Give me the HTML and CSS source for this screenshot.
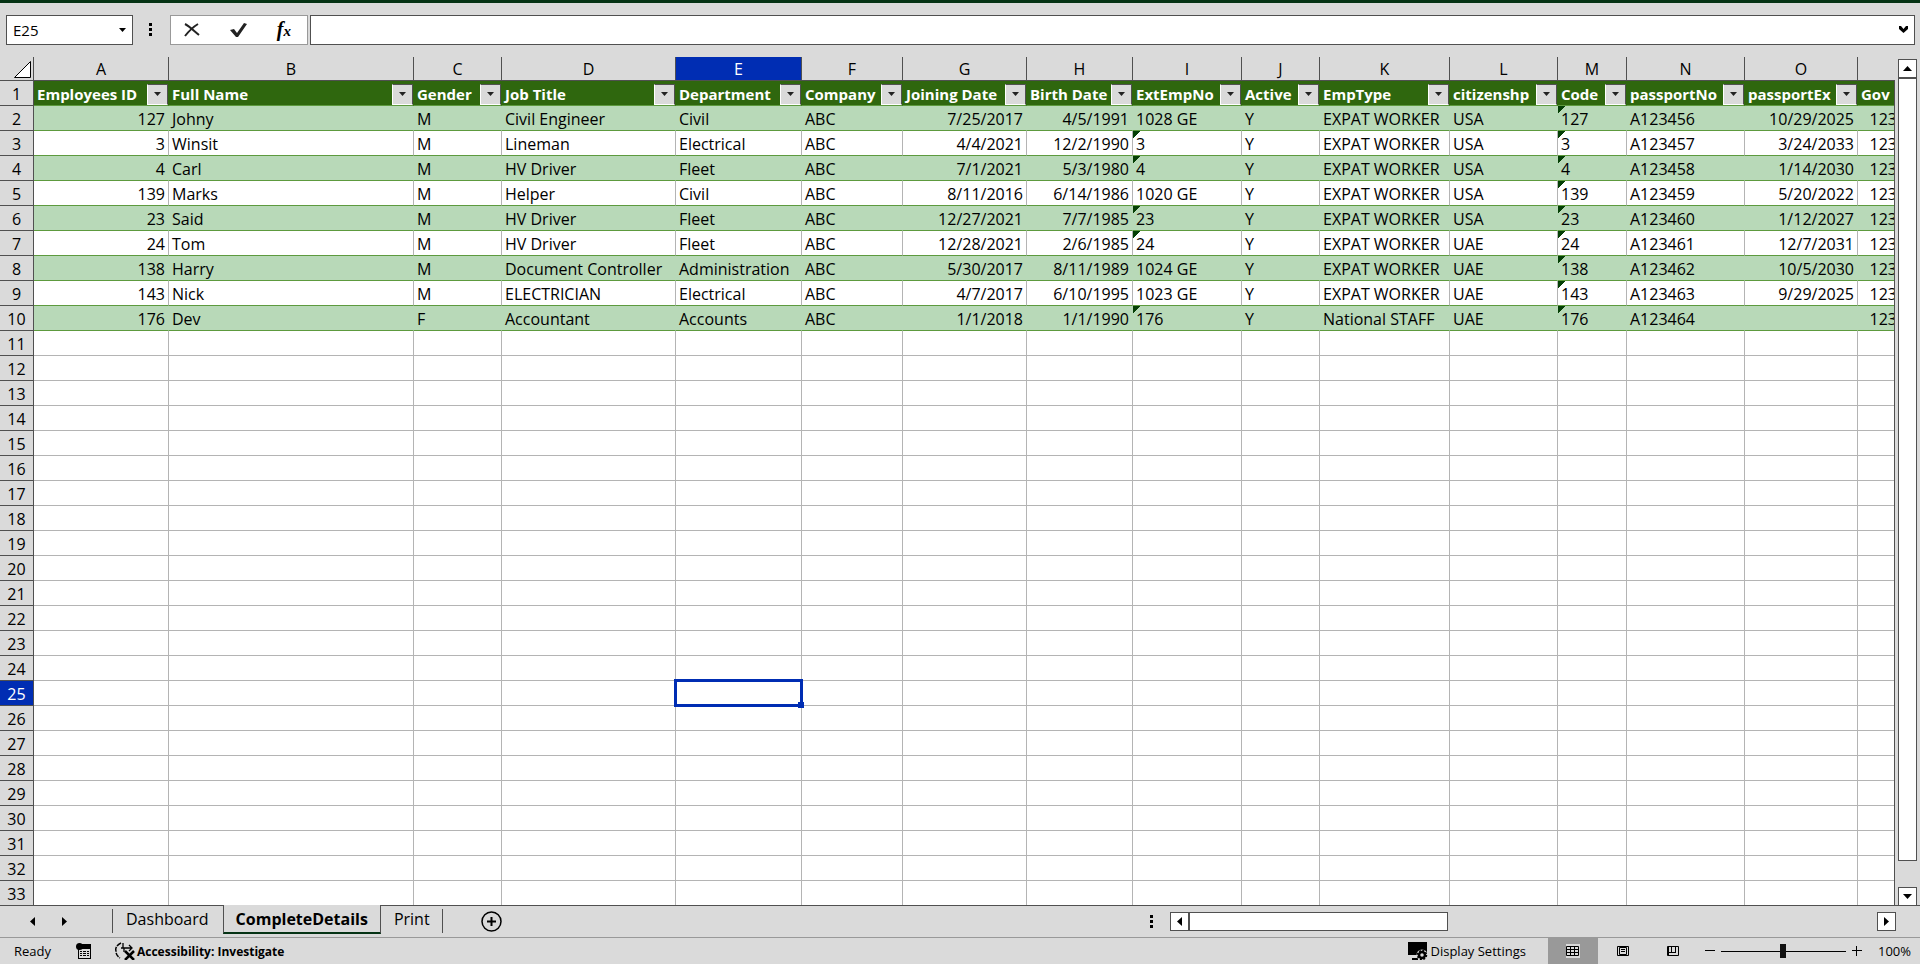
FILE: index.html
```
<!DOCTYPE html>
<html lang="en">
<head>
    <meta charset="UTF-8">
    <meta name="viewport" content="width=device-width, initial-scale=1.0">
    <title>CompleteDetails</title>
    <link rel="stylesheet" href="styles.css">
</head>
<body>
    <div class="app">

        <!-- Formula bar -->
        <div class="formula-bar">
            <div class="name-box">
                <input type="text" value="E25" aria-label="Name Box">
                <button aria-label="Open names"><svg width="7" height="4"><path d="M0 0h7L3.500 4z"/></svg></button>
            </div>
            <svg class="dots" width="3" height="13"><path d="M0 0h3v3H0zM0 5h3v3H0zM0 10h3v3H0z"/></svg>
            <div class="formula-buttons">
                <button aria-label="Cancel">
                    <svg width="16" height="14" fill="none" stroke="#222"><path d="M1 1c4 2 9 7 14 11" stroke-width="2"/><path d="M14 1C9 4 5 8 1 13" stroke-width="2"/></svg>
                </button>
                <button aria-label="Enter">
                    <svg width="17" height="14" fill="#222"><path d="M0 7l4-1 3 4L14 0l3 1L8 14H6z"/></svg>
                </button>
                <button class="fx" aria-label="Insert Function">f<span>x</span></button>
            </div>
            <div class="formula-input">
                <input type="text" value="" aria-label="Formula">
                <button aria-label="Expand formula bar"><svg width="9" height="7"><path d="M0 0h2l2.500 3L7 0h2v3L4.500 7 0 3z"/></svg></button>
            </div>
        </div>

        <!-- Grid -->
        <div class="main">
            <div class="grid">
                <table>
                    <colgroup id="cols"></colgroup>
                    <thead><tr id="letters"></tr></thead>
                    <tbody id="rows"></tbody>
                </table>
            </div>
            <div class="scroll-y">
                <button aria-label="Scroll up"><svg width="9" height="5"><path d="M0 5h9L4.500 0z"/></svg></button>
                <div class="thumb-y"></div>
                <div class="space-y"></div>
                <button aria-label="Scroll down"><svg width="9" height="5"><path d="M0 0h9L4.500 5z"/></svg></button>
            </div>
        </div>

        <!-- Sheet tabs -->
        <div class="tab-bar">
            <div class="tab-nav">
                <button aria-label="Previous sheet"><svg width="5" height="9"><path d="M5 0v9L0 4.500z"/></svg></button>
                <button aria-label="Next sheet"><svg width="5" height="9"><path d="M0 0v9l5-4.500z"/></svg></button>
            </div>
            <div class="tabs">
                <button class="tab tab-first">Dashboard</button>
                <button class="tab active">CompleteDetails</button>
                <button class="tab tab-last">Print</button>
            </div>
            <button class="add-sheet" aria-label="New sheet">
                <svg width="21" height="21" fill="none" stroke="#000"><circle cx="10.500" cy="10.500" r="9.500" stroke-width="1.500"/><path d="M10.500 6v9M6 10.500h9" stroke-width="2"/></svg>
            </button>
            <div class="scroll-x">
                <svg class="dots" width="3" height="13"><path d="M0 0h3v3H0zM0 5h3v3H0zM0 10h3v3H0z"/></svg>
                <button aria-label="Scroll left"><svg width="5" height="9"><path d="M5 0v9L0 4.500z"/></svg></button>
                <div class="thumb-x"></div>
                <div class="space-x"></div>
                <button aria-label="Scroll right"><svg width="5" height="9"><path d="M0 0v9l5-4.500z"/></svg></button>
            </div>
        </div>

        <!-- Status bar -->
        <div class="status-bar">
            <span class="ready">Ready</span>
            <button class="macro" aria-label="Record macro">
                <svg width="15" height="16"><path d="M2 1h13v15H2z"/><path d="M3 6h11v9H3z" fill="#dadada"/><circle cx="3.500" cy="3.500" r="3.500"/><path d="M4 8h2v1H4zM7 8h3v1H7zM11 8h2v1h-2zM4 10h2v1H4zM7 10h3v1H7zM11 10h2v1h-2zM4 12h2v1H4zM7 12h3v1H7zM11 12h2v1h-2z"/></svg>
            </button>
            <button class="accessibility">
                <svg width="20" height="18" fill="none" stroke="#000"><path d="M6 1C2 3 0 6 1 9c0 3 1 5 4 7" stroke-width="1.500" stroke-dasharray="5 1"/><path d="M8 1v5M6 6h10M14 3l3 3-3 3M9 6v4" stroke-width="1.300"/><path d="M10 9l9 9M19 9l-9 9" stroke-width="2.500"/></svg>
                Accessibility: Investigate
            </button>
            <button class="display-settings">
                <svg width="20" height="18"><path d="M0 0h19v13H0zM4 16h6v2H4z"/><circle cx="14" cy="13" r="5.500" fill="#dadada"/><circle cx="14" cy="13" r="3" fill="none" stroke="#000" stroke-width="2.500"/><circle cx="14" cy="13" r="4.500" fill="none" stroke="#000" stroke-width="1.500" stroke-dasharray="2 1.500"/></svg>
                Display Settings
            </button>
            <button class="view selected" aria-label="Normal">
                <svg width="14" height="14"><path d="M0 0h14v14H0z" fill="#dadada"/><path d="M.5 2.500h12v9H.5zM.5 5.500h12M.5 8.500h12M4.500 2.500v9M8.500 2.500v9" fill="none" stroke="#000"/></svg>
            </button>
            <button class="view" aria-label="Page Layout">
                <svg width="12" height="10" fill="none" stroke="#000"><path d="M.5.5h11v9H.5zM2.500 1.500h7v7h-7zM4 3.500h4M4 5.500h4"/></svg>
            </button>
            <button class="view" aria-label="Page Break Preview">
                <svg width="12" height="10" fill="none" stroke="#000"><path d="M.5.5h11v9H.5zM1.500 1v8M4.500.5v6M8.500.5v6M1 6.500h8"/></svg>
            </button>
            <div class="zoom">
                <button aria-label="Zoom out"><svg width="10" height="10"><path d="M0 4h10v1H0z"/></svg></button>
                <input type="range" min="10" max="190" value="100" aria-label="Zoom">
                <button aria-label="Zoom in"><svg width="10" height="10"><path d="M0 4h10v1H0zM4 0h1v10H4z"/></svg></button>
            </div>
            <button class="percent">100%</button>
        </div>
    </div>

    <script src="script.js"></script>
</body>
</html>
```
FILE: styles.css
```
* {
    box-sizing: border-box;
}

body {
    margin: 0;
    background: #fff;
    color: #000;
    font-family: "Open Sans", "Noto Sans", sans-serif;
    font-size: 16px;
}

button, input {
    margin: 0;
    padding: 0;
    border: none;
    background: none;
    color: inherit;
    font: inherit;
}

svg {
    display: block;
    flex: none;
}

.app {
    display: flex;
    flex-direction: column;
    height: calc(100vh - 2px);
    background: #dadada;
    border-top: 3px solid #053314;
    overflow: hidden;
}

/* Formula bar */
.formula-bar {
    display: flex;
    align-items: center;
    flex: none;
    height: 54px;
    padding: 0 5px 1px 6px;
}

.name-box, .formula-input {
    display: flex;
    align-items: center;
    height: 30px;
    background: #fff;
    border: 1px solid #505050;
}

.name-box {
    width: 127px;
    padding: 0 6px;
    font-size: 15px;
}

.name-box input, .formula-input input {
    flex: 1;
    min-width: 0;
    height: 28px;
    outline: none;
}

.formula-bar .dots {
    margin: 0 18px 0 16px;
}

.formula-buttons {
    display: flex;
    align-items: center;
    justify-content: space-between;
    width: 138px;
    height: 30px;
    margin-right: 2px;
    padding: 0 16px 0 13px;
    background: #fff;
    border: 1px solid #999;
}

.fx {
    font-family: "Liberation Serif", serif;
    font-size: 20px;
    font-style: italic;
    font-weight: bold;
    line-height: 24px;
}

.fx span {
    font-size: 15px;
}

.formula-input {
    flex: 1;
    padding: 0 6px;
}

/* Grid */
.main {
    display: flex;
    flex: 1;
    min-height: 0;
}

.grid {
    flex: 1;
    min-width: 0;
    overflow: hidden;
}

table {
    width: max-content;
    table-layout: fixed;
    border-collapse: separate;
    border-spacing: 0;
}

th, td {
    height: 25px;
    padding: 2px 3px 0;
    border-right: 1px solid #b4b4b4;
    border-bottom: 1px solid #b4b4b4;
    line-height: 22px;
    white-space: nowrap;
    text-align: left;
}

td {
    background: #fff;
}

thead th, .row-number {
    padding: 2px 0 0;
    background: #dadada;
    border-color: #505050;
    font-weight: normal;
    text-align: center;
}

thead th {
    height: 24px;
    line-height: 21px;
}

thead .selected, .row-number.selected {
    background: #002db3;
    color: #fff;
}

.corner svg {
    margin-left: 14px;
}

.data td {
    border-bottom-color: #5d9a3e;
}

.data.banded td {
    background: #b8d9b8;
    border-right-color: #b8d9b8;
}

.titles td {
    padding: 2px 0 0;
    background: #2f670e;
    border-right-color: #2f670e;
    border-bottom-color: #5d9a3e;
    color: #fff;
    font-size: 15px;
    font-weight: bold;
}

.title {
    display: flex;
    align-items: center;
    justify-content: space-between;
    padding-left: 3px;
}

.filter {
    display: flex;
    align-items: center;
    justify-content: center;
    width: 21px;
    height: 21px;
    background: #dadada;
    border: 1px solid #fff;
    border-top-color: #505050;
    border-right-color: #505050;
}

td.number {
    text-align: right;
}

/* Number stored as text */
.flag {
    background-image: linear-gradient(135deg, #053f05 5px, transparent 5px) !important;
}

.active-cell {
    position: relative;
}

.active-cell::before {
    content: "";
    position: absolute;
    inset: -2px;
    z-index: 1;
    border: 3px solid #002db3;
}

.active-cell::after {
    content: "";
    position: absolute;
    right: -3px;
    bottom: -3px;
    z-index: 1;
    width: 6px;
    height: 6px;
    background: #002db3;
}

/* Scroll bars */
.scroll-y {
    display: flex;
    flex-direction: column;
    width: 26px;
    padding: 2px 3px 0 4px;
    margin-bottom: -1px;
    z-index: 1;
    background: linear-gradient(#505050, #505050) 0 23px / 1px 100% no-repeat;
}

.scroll-y button, .scroll-x button {
    display: flex;
    align-items: center;
    justify-content: center;
    flex: none;
    width: 19px;
    height: 19px;
    background: #fff;
    border: 1px solid #505050;
}

.thumb-y {
    flex: 30;
    background: #fff;
    border: 1px solid #505050;
}

.space-y {
    flex: 1;
}

/* Sheet tabs */
.tab-bar {
    display: flex;
    flex: none;
    height: 32px;
    border-top: 1px solid #505050;
}

.tab-nav {
    display: flex;
    align-items: center;
    gap: 27px;
    width: 112px;
    padding-left: 30px;
}

.tabs {
    display: flex;
}

.tab {
    position: relative;
    height: 28px;
    padding: 0 13px 2px;
    line-height: 26px;
}

.tab.active {
    height: 29px;
    margin-top: -1px;
    padding: 0 12px;
    background: #dadada;
    border-left: 1px solid #505050;
    border-right: 1px solid #505050;
    border-bottom: 2px solid #053314;
    font-weight: bold;
}

.tab-first {
    padding: 0 14px 2px;
}

.tab-first::before, .tab-last::after {
    content: "";
    position: absolute;
    top: 3px;
    left: 0;
    width: 1px;
    height: 24px;
    background: #505050;
}

.tab-last::after {
    left: auto;
    right: 0;
}

.add-sheet {
    margin-left: 38px;
}

.scroll-x {
    display: flex;
    align-items: center;
    width: 746px;
    margin: 0 24px 0 auto;
}

.scroll-x .dots {
    margin-right: 17px;
}

.thumb-x {
    flex: 3;
    height: 19px;
    background: #fff;
    border: 1px solid #505050;
}

.space-x {
    flex: 5;
}

/* Status bar */
.status-bar {
    display: flex;
    align-items: center;
    flex: none;
    height: 27px;
    border-top: 1px solid #999;
    font-size: 13px;
}

.ready {
    width: 62px;
    margin-left: 14px;
}

.accessibility, .display-settings {
    display: flex;
    align-items: center;
    gap: 2px;
}

.accessibility {
    margin-left: 24px;
    font-size: 12px;
    font-weight: bold;
}

.display-settings {
    margin-left: auto;
    margin-right: 22px;
}

.view {
    display: flex;
    align-items: center;
    justify-content: center;
    width: 50px;
    height: 26px;
}

.view.selected {
    background: #999;
}

.zoom {
    display: flex;
    align-items: center;
    gap: 6px;
    margin-left: 7px;
}

.zoom input {
    width: 125px;
    height: 14px;
    appearance: none;
    background: linear-gradient(#000, #000) 0 7px / 100% 1px no-repeat;
}

.zoom input::-webkit-slider-thumb {
    appearance: none;
    width: 6px;
    height: 14px;
    background: #111;
}

.percent {
    margin: 0 9px 0 16px;
}
```
FILE: script.js
```
const columns = [
    ['A', 135, 'Employees ID'], ['B', 245, 'Full Name'], ['C', 88, 'Gender'], ['D', 174, 'Job Title'],
    ['E', 126, 'Department'], ['F', 101, 'Company'], ['G', 124, 'Joining Date'], ['H', 106, 'Birth Date'],
    ['I', 109, 'ExtEmpNo'], ['J', 78, 'Active'], ['K', 130, 'EmpType'], ['L', 108, 'citizenshp'],
    ['M', 69, 'Code'], ['N', 118, 'passportNo'], ['O', 113, 'passportEx'], ['', 43, 'Gov']
];

const employees = [
    ['127', 'Johny', 'M', 'Civil Engineer', 'Civil', 'ABC', '7/25/2017', '4/5/1991', '1028 GE', 'Y', 'EXPAT WORKER', 'USA', '127', 'A123456', '10/29/2025', '123'],
    ['3', 'Winsit', 'M', 'Lineman', 'Electrical', 'ABC', '4/4/2021', '12/2/1990', '3', 'Y', 'EXPAT WORKER', 'USA', '3', 'A123457', '3/24/2033', '123'],
    ['4', 'Carl', 'M', 'HV Driver', 'Fleet', 'ABC', '7/1/2021', '5/3/1980', '4', 'Y', 'EXPAT WORKER', 'USA', '4', 'A123458', '1/14/2030', '123'],
    ['139', 'Marks', 'M', 'Helper', 'Civil', 'ABC', '8/11/2016', '6/14/1986', '1020 GE', 'Y', 'EXPAT WORKER', 'USA', '139', 'A123459', '5/20/2022', '123'],
    ['23', 'Said', 'M', 'HV Driver', 'Fleet', 'ABC', '12/27/2021', '7/7/1985', '23', 'Y', 'EXPAT WORKER', 'USA', '23', 'A123460', '1/12/2027', '123'],
    ['24', 'Tom', 'M', 'HV Driver', 'Fleet', 'ABC', '12/28/2021', '2/6/1985', '24', 'Y', 'EXPAT WORKER', 'UAE', '24', 'A123461', '12/7/2031', '123'],
    ['138', 'Harry', 'M', 'Document Controller', 'Administration', 'ABC', '5/30/2017', '8/11/1989', '1024 GE', 'Y', 'EXPAT WORKER', 'UAE', '138', 'A123462', '10/5/2030', '123'],
    ['143', 'Nick', 'M', 'ELECTRICIAN', 'Electrical', 'ABC', '4/7/2017', '6/10/1995', '1023 GE', 'Y', 'EXPAT WORKER', 'UAE', '143', 'A123463', '9/29/2025', '123'],
    ['176', 'Dev', 'F', 'Accountant', 'Accounts', 'ABC', '1/1/2018', '1/1/1990', '176', 'Y', 'National STAFF', 'UAE', '176', 'A123464', '', '123']
];

const totalRows = 33;
const activeRow = 25;
const activeColumn = 4;
const rightAligned = [0, 6, 7, 14, 15];
const arrow = '<svg width="7" height="4" fill="#222"><path d="M0 0h7L3.5 4z"/></svg>';

// Column widths and letters
document.getElementById('cols').innerHTML =
    '<col style="width:34px">' + columns.map(c => `<col style="width:${c[1]}px">`).join('');

document.getElementById('letters').innerHTML =
    '<th class="corner"><svg width="17" height="17" fill="#fff" stroke="#000"><path d="M.5 16.5h16V.5z"/></svg></th>' +
    columns.map((c, i) => `<th${i === activeColumn ? ' class="selected"' : ''}>${c[0]}</th>`).join('');

function titleCell(column, index) {
    const filter = index < 15 ? `<button class="filter" aria-label="Filter ${column[2]}">${arrow}</button>` : '';
    return `<td><div class="title">${column[2]}${filter}</div></td>`;
}

function dataCell(value, index) {
    const classes = [];
    if (rightAligned.includes(index)) classes.push('number');
    // text cells that only hold digits get the green corner
    if ((index === 8 || index === 12) && /^\d+$/.test(value)) classes.push('flag');
    return `<td class="${classes.join(' ')}">${value}</td>`;
}

let html = '';
for (let row = 1; row <= totalRows; row++) {
    const number = `<th class="row-number${row === activeRow ? ' selected' : ''}">${row}</th>`;
    if (row === 1) {
        html += `<tr class="titles">${number}${columns.map(titleCell).join('')}</tr>`;
    } else if (employees[row - 2]) {
        html += `<tr class="data${row % 2 === 0 ? ' banded' : ''}">${number}${employees[row - 2].map(dataCell).join('')}</tr>`;
    } else {
        const cells = columns.map((c, i) =>
            row === activeRow && i === activeColumn ? '<td class="active-cell"></td>' : '<td></td>');
        html += `<tr>${number}${cells.join('')}</tr>`;
    }
}
document.getElementById('rows').innerHTML = html;
```
